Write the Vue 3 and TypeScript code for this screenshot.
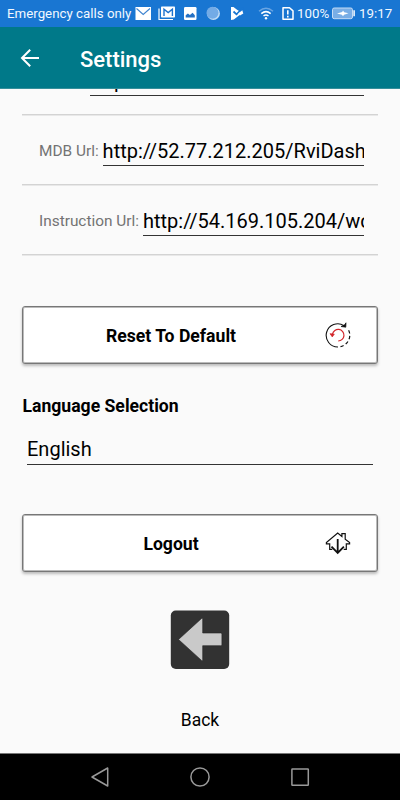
<script setup lang="ts">
interface UrlField {
  label: string
  value: string
}

const fields: UrlField[] = [
  { label: '', value: 'http' },
  { label: 'MDB Url:', value: 'http://52.77.212.205/RviDash' },
  { label: 'Instruction Url:', value: 'http://54.169.105.204/wc' },
]
</script>

<template>
  <div class="screen">
    <div class="status">
      <span class="carrier">Emergency calls only</span>
      <svg class="s-icons" width="112" height="27" viewBox="0 0 112 27">
        <rect x="0.5" y="7" width="15.5" height="13" fill="#fff" />
        <path d="M1.5 8.5l6.7 6 6.8-6" fill="none" stroke="#3f84d0" stroke-width="1.1" />
        <path d="M24 8.5v11h14" fill="none" stroke="#fff" stroke-width="1.2" />
        <rect x="26" y="6.6" width="14" height="11" rx="0.8" fill="#fff" />
        <path d="M29 16V9.2l4.2 3.4 4.2-3.4V16" fill="none" stroke="#1e72cd" stroke-width="1.4" />
        <rect x="49" y="7" width="12.5" height="13" rx="1.2" fill="#fff" />
        <path d="M50.7 17.5v-2.2l2.2-1.8 2 1.6 2.7-2.4 2.2 2.5v2.3z" fill="#2471c4" />
        <circle cx="78.4" cy="13.5" r="6.5" fill="#c0dcf6" />
        <circle cx="77.5" cy="12.8" r="6" fill="#73abe6" />
        <path d="M96 7h2.5l3.2 2.5 5.5 3.5-8.4 6.5L96 20z" fill="#fff" />
        <path d="M98.5 11.5l3 2.8 6.5-6.5" fill="none" stroke="#1976d2" stroke-width="1.8" />
        <path d="M103 13.8l4.3-3.5 1 3.2-3.3 2z" fill="#fff" />
      </svg>
      <svg class="wifi" width="16" height="27" viewBox="0 0 16 27">
        <path d="M1 11.2q7-6 14 0" fill="none" stroke="#69a5e3" stroke-width="1.4" />
        <path d="M3.3 13.6q4.7-4 9.4 0M5.5 16q2.5-2.1 5 0" fill="none" stroke="#fff" stroke-width="1.5" />
        <circle cx="8" cy="18.2" r="1.2" fill="#fff" />
      </svg>
      <svg class="sim" width="12" height="27" viewBox="0 0 12 27">
        <path d="M1 7.7h6.5l3.5 3.2v8.4H1z" fill="none" stroke="#fff" stroke-width="1.5" stroke-linejoin="round" />
        <path d="M5.8 10.3v4.3M5.8 15.7v1.7" stroke="#fff" stroke-width="1.6" />
      </svg>
      <span class="percent">100%</span>
      <svg class="battery" width="23" height="27" viewBox="0 0 23 27">
        <rect x="0.5" y="8" width="20" height="10.7" rx="1.7" fill="#79aee6" stroke="#c5dcf5" />
        <path d="M5 13.5l5.2-1.4.8-1.6 1.2 1.8 4.3 1-4.5 1.4-1 1.5-1.1-1.5z" fill="#fff" />
        <path d="M22.1 10.3v6" stroke="#fff" stroke-width="1.5" />
      </svg>
      <span class="clock">19:17</span>
    </div>

    <header class="bar">
      <svg class="back-arrow" width="20" height="20" viewBox="0 0 20 20">
        <path d="M10.2 1.7L2 10l8.2 8.3M2 10h17" fill="none" stroke="#fff" stroke-width="2" />
      </svg>
      <h1>Settings</h1>
    </header>

    <main class="content">
      <div class="fields">
        <div v-for="(field, i) in fields" :key="i" class="field">
          <span class="label">{{ field.label }}</span>
          <span class="value">{{ field.value }}</span>
        </div>
      </div>

      <button class="card reset" type="button">
        <span class="card-text">Reset To Default</span>
        <svg class="card-icon" width="26" height="28" viewBox="0 0 26 28">
          <path d="M19 4.6A11.6 11.6 0 1 0 13 26" fill="none" stroke="#111" stroke-width="1.1" />
          <path d="M15.5 25.6A11.6 11.6 0 0 0 22.5 7.3" fill="none" stroke="#111" stroke-width="1.2" stroke-dasharray="3.4 2.4" />
          <path d="M16 5.5l4.8.7.2-4.4-1.4 2z" fill="#111" stroke="#111" stroke-width="0.7" />
          <path d="M7.5 13A5.8 5.8 0 1 1 13.2 20" fill="none" stroke="#d3262b" stroke-width="1.2" />
          <path d="M5 12.7l4.3.4-2 2.8z" fill="#d3262b" stroke="#d3262b" stroke-width="0.7" />
        </svg>
      </button>

      <h2>Language Selection</h2>
      <div class="select">English</div>

      <button class="card logout" type="button">
        <span class="card-text">Logout</span>
        <svg class="card-icon" width="26" height="28" viewBox="0 0 26 28">
          <path d="M7.3 20.3H4.7v-5.5H1.4v-1.3L12.7 4l4.2 3.4V4.6h3.3v5.7l4.4 3.2v1.3h-3.3v5.5h-2.6" fill="none" stroke="#111" stroke-width="1.2" />
          <path d="M12.7 10v13.5M6.5 17.6l6.2 6.3 6.2-6.3" fill="none" stroke="#111" stroke-width="1.8" />
        </svg>
      </button>

      <div class="back">
        <svg width="60" height="60" viewBox="0 0 60 60">
          <rect x="0.8" y="0.5" width="58.4" height="58.5" rx="5" fill="#323232" />
          <path d="M8.5 29.5L31.5 8.5q1.2-.7 1.2.8V23h18q1.2 0 1.2 1.2v10.3q0 1.2-1.2 1.2h-18v14q0 1.4-1.2.7z" fill="#c9c9c9" stroke="#222" stroke-width="0.6" />
        </svg>
        <span>Back</span>
      </div>
    </main>

    <nav class="nav">
      <svg width="20" height="22" viewBox="0 0 20 22">
        <path d="M2 11L17.7 2v18z" fill="none" stroke="#999" stroke-width="1.5" stroke-linejoin="round" />
      </svg>
      <svg width="22" height="22" viewBox="0 0 22 22">
        <circle cx="11" cy="11" r="9.1" fill="none" stroke="#999" stroke-width="1.5" />
      </svg>
      <svg width="20" height="22" viewBox="0 0 20 22">
        <rect x="1.9" y="2.9" width="16.4" height="16.4" rx="0.5" fill="none" stroke="#999" stroke-width="1.5" />
      </svg>
    </nav>
  </div>
</template>

<style>
body {
  margin: 0;
  background: #fafafa;
}
</style>

<style scoped>
.screen {
  width: 400px;
  height: 800px;
  display: flex;
  flex-direction: column;
  overflow: hidden;
  background: #fafafa;
  color: #000;
  font-family: Roboto, "Liberation Sans", sans-serif;
}
.screen * {
  box-sizing: border-box;
}
.status {
  display: flex;
  align-items: center;
  flex: none;
  height: 27px;
  padding-left: 7px;
  background: #1976d2;
  color: #f2f8ff;
  font-size: 13.3px;
  line-height: 27px;
  white-space: nowrap;
}
.status svg {
  flex: none;
}
.carrier {
  width: 128px;
}
.wifi {
  margin-left: 11px;
}
.sim {
  margin-left: 8px;
}
.percent {
  width: 31px;
  margin-left: 3px;
}
.battery {
  margin-left: 4px;
}
.clock {
  margin-left: 4px;
}
.bar {
  display: flex;
  align-items: center;
  flex: none;
  height: 62px;
  padding: 0 0 1px 20px;
  background: #007989;
  border-bottom: 1px solid #358f9b;
  color: #fff;
}
.back-arrow {
  margin-top: 1px;
}
h1 {
  margin: 5px 0 0 40px;
  font-size: 22px;
  font-weight: 500;
  line-height: 28px;
}
.content {
  flex: 1;
  min-height: 0;
  padding: 0 22px;
  overflow: hidden;
}
.fields {
  margin-top: -44px;
}
.field {
  display: flex;
  align-items: flex-start;
  height: 70px;
  padding: 22px 14px 0 17px;
  border-bottom: 1px solid #d3d3d3;
  box-shadow: 0 1px #e8e8e8;
  white-space: nowrap;
}
.label {
  flex: none;
  margin-right: 4px;
  color: #737373;
  font-size: 15.4px;
  line-height: 28px;
}
.field:first-child .label {
  width: 47px;
}
.value {
  flex: 1;
  min-width: 0;
  height: 29px;
  overflow: hidden;
  border-bottom: 1px solid #333;
  font-size: 20px;
  line-height: 28px;
}
.card {
  display: flex;
  align-items: center;
  width: 356px;
  height: 58px;
  padding: 0 26px 0 0;
  border: 1px solid #777;
  border-radius: 3px;
  background: #fff;
  box-shadow: inset 0 0 0 1px #bbb, 0 2px 3px rgba(0, 0, 0, 0.25);
  color: #000;
  font: 700 17.6px/24px Roboto, "Liberation Sans", sans-serif;
}
.card-text {
  flex: 1;
  padding: 1px 6px 0 0;
  text-align: center;
}
.reset {
  margin-top: 51px;
}
h2 {
  margin: 30px 0 0 0.5px;
  font-size: 17.6px;
  font-weight: 700;
  line-height: 24px;
}
.select {
  margin: 17px 5px 0;
  height: 30px;
  border-bottom: 1px solid #333;
  font-size: 20px;
  line-height: 29px;
}
.logout {
  margin-top: 49px;
}
.back {
  display: flex;
  flex-direction: column;
  align-items: center;
  margin-top: 38px;
  font-size: 17.5px;
  line-height: 24px;
}
.back span {
  margin-top: 38px;
}
.nav {
  display: flex;
  align-items: center;
  justify-content: space-between;
  flex: none;
  height: 47px;
  padding: 0 90px;
  border-top: 1px solid #777;
  background: #000;
}
</style>
